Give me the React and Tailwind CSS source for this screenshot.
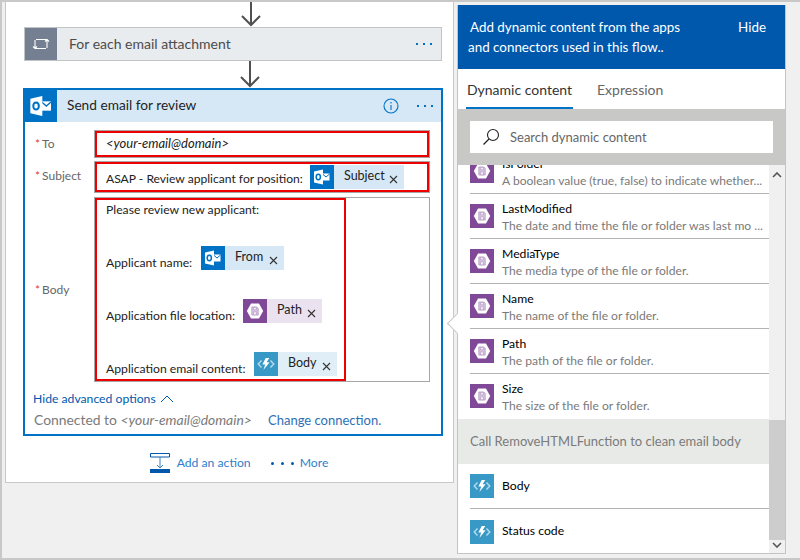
const OutlookGlyph = ({ size }) => (
  <svg width={size} height={size} viewBox="0 0 18 18">
    <path d="M9 5.500h7.500v7H9z" fill="#fff" />
    <path d="M9.500 6l3.500 3 3.500-3" fill="none" stroke="#0072c6" strokeWidth="1" />
    <path d="M1 3.500L10 1.500v15l-9-2z" fill="#fff" />
    <ellipse cx="5.300" cy="9" rx="2.100" ry="2.700" fill="none" stroke="#0072c6" strokeWidth="1.500" />
  </svg>
);

const OutlookIcon = () => (
  <div className="w-6 h-6 shrink-0 bg-[#0072c6] flex items-center justify-center">
    <OutlookGlyph size={18} />
  </div>
);

const FileIcon = () => (
  <div className="w-6 h-6 shrink-0 bg-[#804998] flex items-center justify-center">
    <svg width="18" height="18" viewBox="0 0 18 18">
      <path d="M5 1.500h8L17.200 9 13 16.500H5L.8 9z" fill="#fff" />
      <path d="M5.800 5h5l1.400 1.400V13H5.800z" fill="#d9c6e2" stroke="#b397c2" strokeWidth="0.8" />
      <path d="M7.500 5.400h3v2.400h-3zM7.500 9.800h3v3h-3z" fill="#f3ecf6" stroke="#b397c2" strokeWidth="0.6" />
    </svg>
  </div>
);

const FunctionIcon = () => (
  <div className="w-6 h-6 shrink-0 bg-[#3999c6] flex items-center justify-center">
    <svg width="18" height="18" viewBox="0 0 18 18">
      <path d="M4.500 5.500L1.200 9l3.300 3.500" fill="none" stroke="#b5dbee" strokeWidth="1.400" />
      <path d="M13.500 5.500L16.800 9l-3.300 3.500" fill="none" stroke="#b5dbee" strokeWidth="1.400" />
      <path d="M8.700 3h3.600L9.600 7.200h3L6.400 15l1.800-5.600H5.400z" fill="#fff" />
    </svg>
  </div>
);

const DownArrow = ({ className }) => (
  <svg width="20" height="27" viewBox="0 0 20 27" className={`shrink-0 ${className}`}>
    <path d="M10 0v25M1 16l9 9 9-9" fill="none" stroke="#505050" strokeWidth="2" />
  </svg>
);

const Dots = ({ className }) => (
  <div className={`flex gap-[5px] ${className}`}>
    <span className="w-[2px] h-[2px] bg-[#0072c6]" />
    <span className="w-[2px] h-[2px] bg-[#0072c6]" />
    <span className="w-[2px] h-[2px] bg-[#0072c6]" />
  </div>
);

const Chip = ({ label, icon, bg, text = 'text-[#222]', width }) => (
  <div className={`h-6 flex items-center shrink-0 ${bg} ${width}`}>
    {icon}
    <span className={`ml-[10px] text-[12.5px] leading-6 -mt-[2px] ${text}`}>{label}</span>
    <svg width="9" height="9" viewBox="0 0 9 9" className="ml-auto mr-[6px] mt-[4px]">
      <path d="M1 1l7 7M8 1L1 8" stroke="#333" strokeWidth="1.100" />
    </svg>
  </div>
);

const Label = ({ children }) => (
  <div className="w-[59px] shrink-0 text-[12px] text-[#666]">
    <span className="text-[#e23b3b] mr-[2px]">*</span>
    {children}
  </div>
);

const fileRows = [
  ['IsFolder', 'A boolean value (true, false) to indicate whether...'],
  ['LastModified', 'The date and time the file or folder was last mo ...'],
  ['MediaType', 'The media type of the file or folder.'],
  ['Name', 'The name of the file or folder.'],
  ['Path', 'The path of the file or folder.'],
  ['Size', 'The size of the file or folder.'],
];

const FileRow = ({ name, desc, last }) => (
  <div className={`h-[45px] ml-[12px] flex items-start pt-[10px] ${last ? '' : 'border-b border-[#b3b3b3]'}`}>
    <FileIcon />
    <div className="ml-2 min-w-0 -mt-[3px]">
      <div className="text-[12.2px] leading-[15px] text-black">{name}</div>
      <div className="text-[12.1px] leading-[19px] text-[#7a7a7a] whitespace-nowrap">{desc}</div>
    </div>
  </div>
);

const FunctionRow = ({ name, last }) => (
  <div className={`h-[45px] ml-[12px] flex items-center ${last ? '' : 'border-b border-[#b3b3b3]'}`}>
    <FunctionIcon />
    <div className="ml-2 text-[12.2px] text-black">{name}</div>
  </div>
);

const bodyRows = [
  { text: 'Applicant name:', chip: 'From', icon: <OutlookIcon />, bg: 'bg-[#d6e8f5]', width: 'w-[83px]', textWidth: 'w-[95px]' },
  { text: 'Application file location:', chip: 'Path', icon: <FileIcon />, bg: 'bg-[#ebe2f0]', width: 'w-[79px]', textWidth: 'w-[137px]' },
  { text: 'Application email content:', chip: 'Body', icon: <FunctionIcon />, bg: 'bg-[#e0eff7]', width: 'w-[83px]', textWidth: 'w-[148px]' },
];

export default function App() {
  return (
    <div className="w-[800px] h-[560px] overflow-hidden bg-[#f0f0f0] border-t-2 border-l-2 border-b-2 border-[#c8c8c8] flex items-start font-['Lato',sans-serif]">
      {/* Flow designer side */}
      <div className="ml-[3px] -mt-[2px] w-[449px] h-[483px] shrink-0 bg-white border border-t-0 border-[#c8c8c8] pl-[7px] flex flex-col items-center">
        <DownArrow className="ml-[35px]" />
        <div className="w-[418px] h-[34px] shrink-0 bg-[#e9ecef] border border-[#c1c5c8] flex items-center">
          <div className="w-[32px] h-full bg-[#748091] flex items-center justify-center">
            <svg width="18" height="14" viewBox="0 0 18 14">
              <path d="M3 3v8.500h11M1 9.500l2 2 2-2M15 11V2.500H4M17 4.500l-2-2-2 2" fill="none" stroke="#fff" strokeWidth="1.100" />
            </svg>
          </div>
          <div className="ml-[12px] -mt-[2px] text-[14px] text-[#4b4b4b]">For each email attachment</div>
          <Dots className="ml-auto mr-[9px]" />
        </div>
        <DownArrow className="ml-[34px]" />

        <div className="w-[420px] h-[348px] shrink-0 border-2 border-[#0072c6] flex flex-col">
          <div className="h-[32px] shrink-0 bg-[#d6e8f5] flex items-center">
            <div className="w-[32px] h-[32px] bg-[#0072c6] flex items-center justify-center">
              <OutlookGlyph size={24} />
            </div>
            <div className="ml-[10px] -mt-[1px] text-[13.7px] text-[#1f1f1f]">Send email for review</div>
            <svg width="16" height="16" viewBox="0 0 16 16" className="ml-auto">
              <circle cx="8" cy="8" r="7" fill="none" stroke="#0072c6" strokeWidth="1.100" />
              <path d="M8 7v5M8 4v1.400" stroke="#0072c6" strokeWidth="1.100" />
            </svg>
            <Dots className="ml-[18px] mr-[8px]" />
          </div>

          <div className="pl-[10px] pr-[11px] pt-[8px] flex flex-col">
            <div className="flex items-center h-[28px]">
              <Label>To</Label>
              <div className="flex-1 h-full border border-[#a6a6a6]">
                <div className="h-full border-2 border-[#ee0000] flex items-center pl-[9px] text-[13px] italic text-[#222]">
                  {'<your-email@domain>'}
                </div>
              </div>
            </div>
            <div className="flex items-start h-[32px] mt-[3px]">
              <Label><span className="leading-[30px]">Subject</span></Label>
              <div className="flex-1 h-full border border-[#a6a6a6]">
                <div className="h-full border-2 border-[#ee0000] flex items-center pl-[9px] text-[12.1px] text-[#222]">
                  <span className="whitespace-nowrap w-[204px] shrink-0 mt-[5px]">ASAP - Review applicant for position:</span>
                  <Chip label="Subject" icon={<OutlookIcon />} bg="bg-[#d6e8f5]" width="w-[94px]" />
                </div>
              </div>
            </div>
            <div className="flex items-center h-[185px] mt-[4px]">
              <Label>Body</Label>
              <div className="flex-1 h-full border border-[#a6a6a6]">
                <div className="w-[251px] h-full border-2 border-[#ee0000] pl-[9px] text-[12.2px] text-[#222] flex flex-col">
                  <div className="h-[46px] leading-[20px]">Please review new applicant:</div>
                  {bodyRows.map((row) => (
                    <div key={row.chip} className="h-[27px] mb-[26px] last:mb-0 flex shrink-0">
                      <span className={`self-end whitespace-nowrap leading-[16px] mb-[2px] ${row.textWidth}`}>{row.text}</span>
                      <Chip label={row.chip} icon={row.icon} bg={row.bg} width={row.width} />
                    </div>
                  ))}
                </div>
              </div>
            </div>
          </div>

          <div className="pl-[8px] mt-[8px] flex items-center text-[12.2px] text-[#0058ad]">
            <span className="w-[122px] whitespace-nowrap">Hide advanced options</span>
            <svg width="14" height="8" viewBox="0 0 14 8" className="ml-[5px]">
              <path d="M1 7l6-6 6 6" fill="none" stroke="#0058ad" strokeWidth="1" />
            </svg>
          </div>
          <div className="pl-[9px] mt-[2px] flex items-center text-[#7a7a7a] whitespace-nowrap">
            <span className="w-[234px] text-[13.900px] leading-[20px]">Connected to <span className="italic">{'<your-email@domain>'}</span></span>
            <span className="text-[13px] leading-[20px] text-[#2e6fb5]">Change connection.</span>
          </div>
        </div>

        <div className="mt-[17px] ml-[12px] flex items-center text-[12.2px] text-[#2f7fcb]">
          <svg width="20" height="20" viewBox="0 0 20 20">
            <path d="M.5.500h19v3.500H.5z" fill="none" stroke="#0058ad" />
            <path d="M10 4v11M7 12l3 3 3-3" fill="none" stroke="#3b7fc0" />
            <path d="M0 16h20v4H0z" fill="#0058ad" />
          </svg>
          <span className="ml-[7px] w-[74px] whitespace-nowrap">Add an action</span>
          <div className="ml-[20px] flex gap-[7px]">
            <span className="w-[3px] h-[3px] rounded-full bg-[#0058ad]" />
            <span className="w-[3px] h-[3px] rounded-full bg-[#0058ad]" />
            <span className="w-[3px] h-[3px] rounded-full bg-[#0058ad]" />
          </div>
          <span className="ml-[6px]">More</span>
        </div>
      </div>

      {/* Dynamic content panel */}
      <div className="relative ml-[3px] mt-[3px] w-[329px] h-[549px] shrink-0 border border-t-0 border-[#c4c4c4] bg-white flex flex-col">
        <div className="absolute -left-[8px] top-[311px] w-[15px] h-[15px] rotate-45 bg-white border-l border-b border-[#c4c4c4]" />
        <div className="relative h-[64px] shrink-0 bg-[#0058ad] text-white text-[13.400px] leading-[20px] pl-[11px] pt-[12px] flex justify-between pr-[19px]">
          <div className="whitespace-nowrap">
            <div className="pl-[1px]">Add dynamic content from the apps</div>
            <div className="-ml-[1px]">and connectors used in this flow..</div>
          </div>
          <div>Hide</div>
        </div>
        <div className="relative h-[40px] shrink-0 bg-white flex text-[14px] pl-[8px]">
          <div className="w-[107px] h-full border-b-2 border-[#0072c6] text-[#333] leading-[41px] text-center whitespace-nowrap">Dynamic content</div>
          <div className="ml-[24px] leading-[41px] text-[#666]">Expression</div>
        </div>
        <div className="relative h-[56px] shrink-0 bg-[#c8c9c7] p-[12px]">
          <div className="h-[32px] w-[303px] bg-white flex items-center pl-[12px]">
            <svg width="18" height="18" viewBox="0 0 18 18">
              <circle cx="11" cy="7" r="5.500" fill="none" stroke="#222" strokeWidth="1.100" />
              <path d="M7 11l-5.500 5.500" stroke="#222" strokeWidth="1.200" />
            </svg>
            <span className="ml-[10px] mt-[1px] text-[13px] text-[#666]">Search dynamic content</span>
          </div>
        </div>

        <div className="flex-1 min-h-0 flex">
          <div className="flex-1 min-w-0 overflow-hidden">
            <div className="-mt-[16px]">
              {fileRows.map(([name, desc], i) => (
                <FileRow key={name} name={name} desc={desc} last={i === fileRows.length - 1} />
              ))}
              <div className="h-[45px] bg-[#e8eae8] pl-[12px] flex items-center text-[13px] text-[#7a7a7a]">
                <span className="mt-[1px]">Call RemoveHTMLFunction to clean email body</span>
              </div>
              <FunctionRow name="Body" />
              <FunctionRow name="Status code" last />
            </div>
          </div>
          <div className="w-[16px] shrink-0 bg-[#f0f0f0] flex flex-col items-center">
            <svg width="10" height="6" viewBox="0 0 10 6" className="mt-[7px]">
              <path d="M1 5l4-4 4 4" fill="none" stroke="#555" strokeWidth="1.600" />
            </svg>
            <div className="w-full h-[120px] mt-auto bg-[#cdcdcd]" />
            <svg width="10" height="6" viewBox="0 0 10 6" className="mt-[2px] mb-[5px]">
              <path d="M1 1l4 4 4-4" fill="none" stroke="#555" strokeWidth="1.600" />
            </svg>
          </div>
        </div>
      </div>
    </div>
  );
}
